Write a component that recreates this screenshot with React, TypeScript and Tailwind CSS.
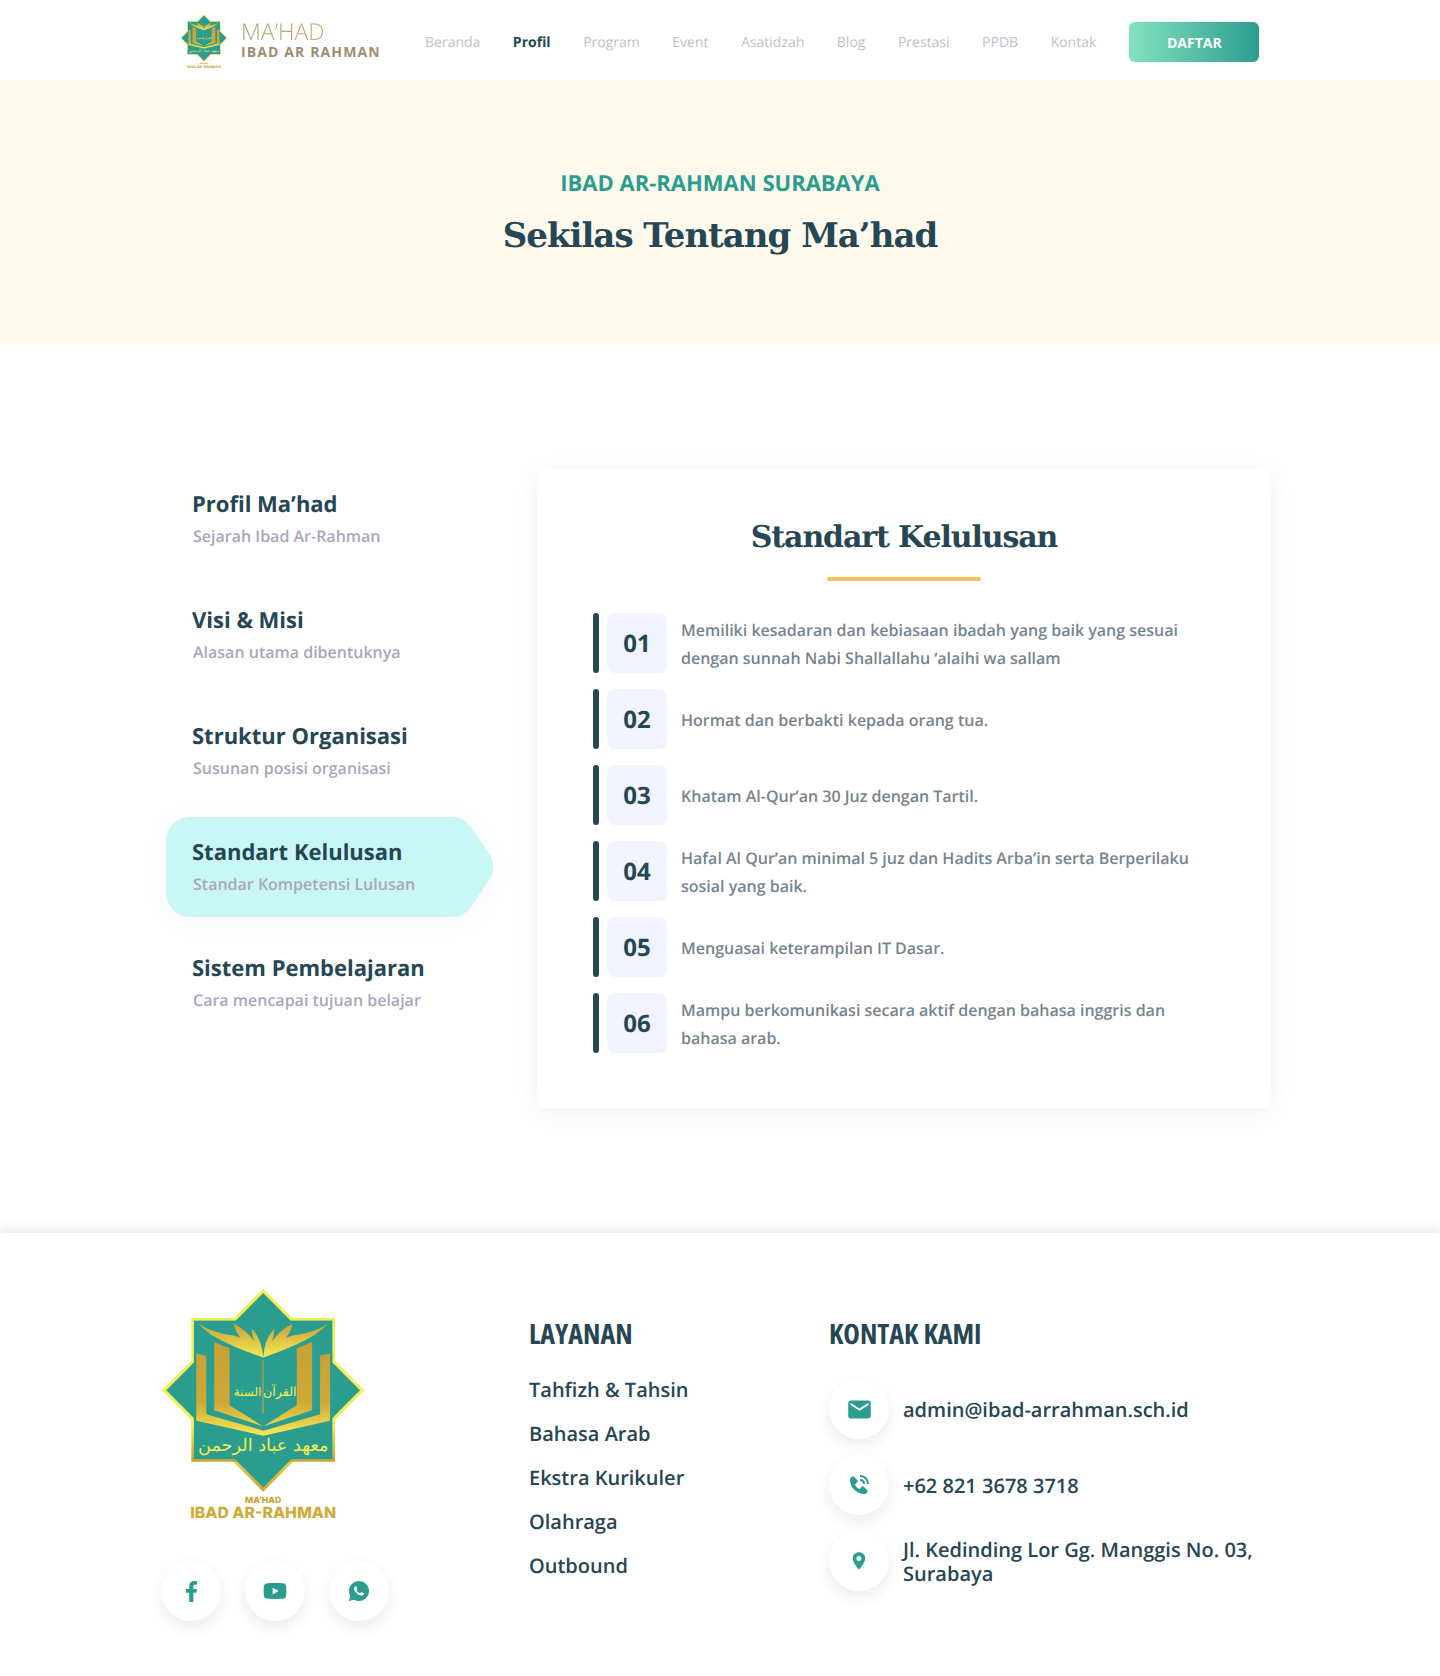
import { FaFacebookF, FaYoutube } from 'react-icons/fa';
import { RiWhatsappFill } from 'react-icons/ri';
import { BiSolidPhoneCall } from 'react-icons/bi';
import { MdEmail } from 'react-icons/md';
import { IoLocationSharp } from 'react-icons/io5';

const navItems = ['Beranda', 'Profil', 'Program', 'Event', 'Asatidzah', 'Blog', 'Prestasi', 'PPDB', 'Kontak'];

const sideItems = [
  { title: 'Profil Ma’had', sub: 'Sejarah Ibad Ar-Rahman' },
  { title: 'Visi & Misi', sub: 'Alasan utama dibentuknya' },
  { title: 'Struktur Organisasi', sub: 'Susunan posisi organisasi' },
  { title: 'Standart Kelulusan', sub: 'Standar Kompetensi Lulusan', active: true },
  { title: 'Sistem Pembelajaran', sub: 'Cara mencapai tujuan belajar' },
];

const standards = [
  'Memiliki kesadaran dan kebiasaan ibadah yang baik yang sesuai dengan sunnah Nabi Shallallahu ‘alaihi wa sallam',
  'Hormat dan berbakti kepada orang tua.',
  'Khatam Al-Qur’an 30 Juz dengan Tartil.',
  'Hafal Al Qur’an minimal 5 juz dan Hadits Arba’in serta Berperilaku sosial yang baik.',
  'Menguasai keterampilan IT Dasar.',
  'Mampu berkomunikasi secara aktif dengan bahasa inggris dan bahasa arab.',
];

const services = ['Tahfizh & Tahsin', 'Bahasa Arab', 'Ekstra Kurikuler', 'Olahraga', 'Outbound'];

const Logo = ({ className, id }: { className: string; id: string }) => (
  <svg viewBox="30 50 620 700" className={className}>
    <defs>
      <linearGradient id={`${id}-page`} gradientUnits="userSpaceOnUse" x1="0" y1="215" x2="0" y2="497">
        <stop offset="0" stopColor="#c8a035" />
        <stop offset="0.65" stopColor="#cfa936" />
        <stop offset="1" stopColor="#f7ea55" />
      </linearGradient>
      <linearGradient id={`${id}-leaf`} gradientUnits="userSpaceOnUse" x1="0" y1="160" x2="0" y2="262">
        <stop offset="0" stopColor="#c8a035" />
        <stop offset="1" stopColor="#f7ea55" />
      </linearGradient>
      <linearGradient id={`${id}-edge`} x1="0" y1="0" x2="0" y2="1">
        <stop offset="0" stopColor="#f5ee55" />
        <stop offset="0.75" stopColor="#f5ee55" />
        <stop offset="1" stopColor="#c9a233" />
      </linearGradient>
    </defs>
    <polygon points="339,55 643,360 339,665 35,360" fill={`url(#${id}-edge)`} />
    <rect x="123" y="143" width="432" height="432" fill={`url(#${id}-edge)`} />
    <polygon points="339,68 630,360 339,652 48,360" fill="#2a9d8f" />
    <rect x="131" y="151" width="416" height="416" fill="#2a9d8f" />
    <path d="M339 262 Q250 232 185 195 Q160 178 143 160 Q190 190 250 196 Q310 212 339 262Z" fill={`url(#${id}-leaf)`} />
    <path d="M339 262 Q428 232 493 195 Q518 178 535 160 Q488 190 428 196 Q368 212 339 262Z" fill={`url(#${id}-leaf)`} />
    <path d="M339 262 Q262 215 250 160 Q310 190 339 262Z" fill={`url(#${id}-leaf)`} />
    <path d="M339 262 Q416 215 428 160 Q368 190 339 262Z" fill={`url(#${id}-leaf)`} />
    <path d="M339 262 Q305 215 305 175 Q335 205 339 262Z" fill={`url(#${id}-leaf)`} />
    <path d="M339 262 Q373 215 373 175 Q343 205 339 262Z" fill={`url(#${id}-leaf)`} />
    <polygon points="138,250 168,256 168,432 340,482 510,432 510,256 540,250 540,452 340,497 138,452" fill={`url(#${id}-page)`} />
    <polygon points="192,215 238,235 238,405 338,468 192,420" fill={`url(#${id}-page)`} />
    <polygon points="486,215 440,235 440,405 340,468 486,420" fill={`url(#${id}-page)`} />
    <rect x="337" y="270" width="3" height="160" fill={`url(#${id}-page)`} />
    <text x="389" y="376" textAnchor="middle" fontSize="38" fill="#f7ea55" fontFamily="'DejaVu Sans', sans-serif">القرآن</text>
    <text x="292" y="376" textAnchor="middle" fontSize="36" fill="#f7ea55" fontFamily="'DejaVu Sans', sans-serif">السنة</text>
    <text x="339" y="542" textAnchor="middle" fontSize="52" textLength="392" lengthAdjust="spacingAndGlyphs" fill="#f7ea55" fontFamily="'DejaVu Sans', sans-serif">معهد عباد الرحمن</text>
    <text x="339" y="700" textAnchor="middle" fontSize="26" fontWeight="800" fill="#c9a233" fontFamily="Inter, sans-serif">MA’HAD</text>
    <text x="339" y="745" textAnchor="middle" fontSize="46" fontWeight="800" textLength="438" lengthAdjust="spacingAndGlyphs" fill="#d0ab38" fontFamily="Inter, sans-serif">IBAD AR-RAHMAN</text>
  </svg>
);

const IconCircle = ({ children }: { children: React.ReactNode }) => (
  <div className="flex h-[60px] w-[60px] shrink-0 items-center justify-center rounded-full bg-white text-[#2a9d8f] shadow-[0_6px_16px_rgba(0,0,0,0.08)]">
    {children}
  </div>
);

const App = () => {
  return (
    <div className="h-[1676px] bg-white font-['Open_Sans',sans-serif] text-[#264653] [text-rendering:geometricPrecision]">
      <nav className="flex h-[80px] items-center pl-[180px]">
        <Logo id="gold-nav" className="mt-[2px] h-[54px] w-[48px]" />
        <div className="-mt-[2px] ml-[13px] w-[184px]">
          <div className="bg-gradient-to-r from-[#a89a72] to-[#e9c04a] bg-clip-text text-[23px] leading-[26px] font-light text-transparent">
            MA’HAD
          </div>
          <div className="text-[14px] leading-[17px] font-bold tracking-[0.08em] text-[#9c8f6f]">
            IBAD AR RAHMAN
          </div>
        </div>
        <div className="flex gap-[32.5px] pt-[4px] text-[14px]">
          {navItems.map((item) => (
            <a key={item} className={item === 'Profil' ? 'font-bold text-[#264653]' : 'text-[#b9c2cb]'}>
              {item}
            </a>
          ))}
        </div>
        <button className="mt-[4px] ml-[33px] h-10 w-[130px] rounded-md bg-gradient-to-r from-[#82e2c0] to-[#2a9d8f] text-[14px] font-bold text-white">
          DAFTAR
        </button>
      </nav>

      <header className="flex h-[264px] flex-col items-center bg-[#fdf9ec] pt-[88px]">
        <div className="text-[22px] leading-[30px] font-bold text-[#2a9d8f]">IBAD AR-RAHMAN SURABAYA</div>
        <h1 className="mt-[13px] font-['DejaVu_Serif',serif] text-[34px] leading-[50px] font-bold tracking-[-1px]">Sekilas Tentang Ma’had</h1>
      </header>

      <main className="flex h-[889px] items-start pt-[125px] pl-[166px]">
        <aside className="flex w-[328px] flex-col gap-4">
          {sideItems.map((item) => (
            <div key={item.title} className="relative h-[100px] pt-[20px] pl-[26px]">
              {item.active && (
                <svg viewBox="0 0 328 100" className="absolute top-0 left-0 h-[100px] w-[328px] drop-shadow-[0_4px_14px_rgba(0,0,0,0.03)]">
                  <path d="M24 0H287Q298 0 305 10L324 38Q331 50 324 62L305 90Q298 100 287 100H24A24 24 0 0 1 0 76V24A24 24 0 0 1 24 0Z" fill="#c8f7f5" />
                </svg>
              )}
              <div className="relative text-[22px] leading-[30px] font-bold">{item.title}</div>
              <div className="relative mt-[5px] pl-[1px] text-[16px] leading-[24px] font-semibold text-[#aba6bb]">{item.sub}</div>
            </div>
          ))}
        </aside>

        <section className="ml-[43px] h-[639px] w-[734px] rounded-lg bg-white px-[56px] pt-[46px] shadow-[0_4px_30px_rgba(0,0,0,0.06)]">
          <h2 className="text-center font-['DejaVu_Serif',serif] text-[30px] leading-[46px] font-bold tracking-[-1.1px]">Standart Kelulusan</h2>
          <div className="mx-auto mt-[16px] h-1 w-[154px] rounded-full bg-[#ffbe5c]" />
          <div className="mt-[32px] flex flex-col gap-4">
            {standards.map((text, i) => (
              <div key={text} className="flex h-[60px] items-center">
                <div className="h-[60px] w-[6px] rounded-full bg-[#264653]" />
                <div className="ml-2 flex h-[60px] w-[60px] shrink-0 items-center justify-center rounded-lg bg-[#f1f4fe] pt-[2px] text-[24px] font-bold">
                  {`0${i + 1}`}
                </div>
                <p className="ml-[14px] w-[520px] pt-[2px] text-[16px] leading-[28px] font-semibold text-[#75848f]">{text}</p>
              </div>
            ))}
          </div>
        </section>
      </main>

      <footer className="flex h-[443px] bg-white pl-[160px] shadow-[0_-3px_12px_rgba(0,0,0,0.1)]">
        <div className="w-[369px] pt-[54px]">
          <Logo id="gold-footer" className="h-[233px] w-[207px]" />
          <div className="mt-[41px] flex gap-6 pl-[1px]">
            <IconCircle><FaFacebookF size={21} /></IconCircle>
            <IconCircle><FaYoutube size={24} /></IconCircle>
            <IconCircle><RiWhatsappFill size={24} /></IconCircle>
          </div>
        </div>
        <div className="w-[300px] pt-[83px]">
          <h3 className="text-[28px] leading-[36px] font-bold [font-stretch:75%]">LAYANAN</h3>
          <ul className="mt-[24px] flex flex-col gap-4">
            {services.map((s) => (
              <li key={s} className="text-[20px] leading-[28px] font-semibold">{s}</li>
            ))}
          </ul>
        </div>
        <div className="pt-[83px]">
          <h3 className="text-[28px] leading-[36px] font-bold [font-stretch:75%]">KONTAK KAMI</h3>
          <div className="mt-[27px] flex flex-col gap-4">
            <div className="flex items-center gap-[14px]">
              <IconCircle><MdEmail size={27} /></IconCircle>
              <span className="pt-[2px] text-[20px] font-semibold">admin@ibad-arrahman.sch.id</span>
            </div>
            <div className="flex items-center gap-[14px]">
              <IconCircle><BiSolidPhoneCall size={24} /></IconCircle>
              <span className="pt-[2px] text-[20px] font-semibold">+62 821 3678 3718</span>
            </div>
            <div className="flex items-center gap-[14px]">
              <IconCircle><IoLocationSharp size={20} /></IconCircle>
              <span className="w-[360px] pt-[2px] text-[20px] leading-[24px] font-semibold">Jl. Kedinding Lor Gg. Manggis No. 03, Surabaya</span>
            </div>
          </div>
        </div>
      </footer>
    </div>
  );
};

export default App;
